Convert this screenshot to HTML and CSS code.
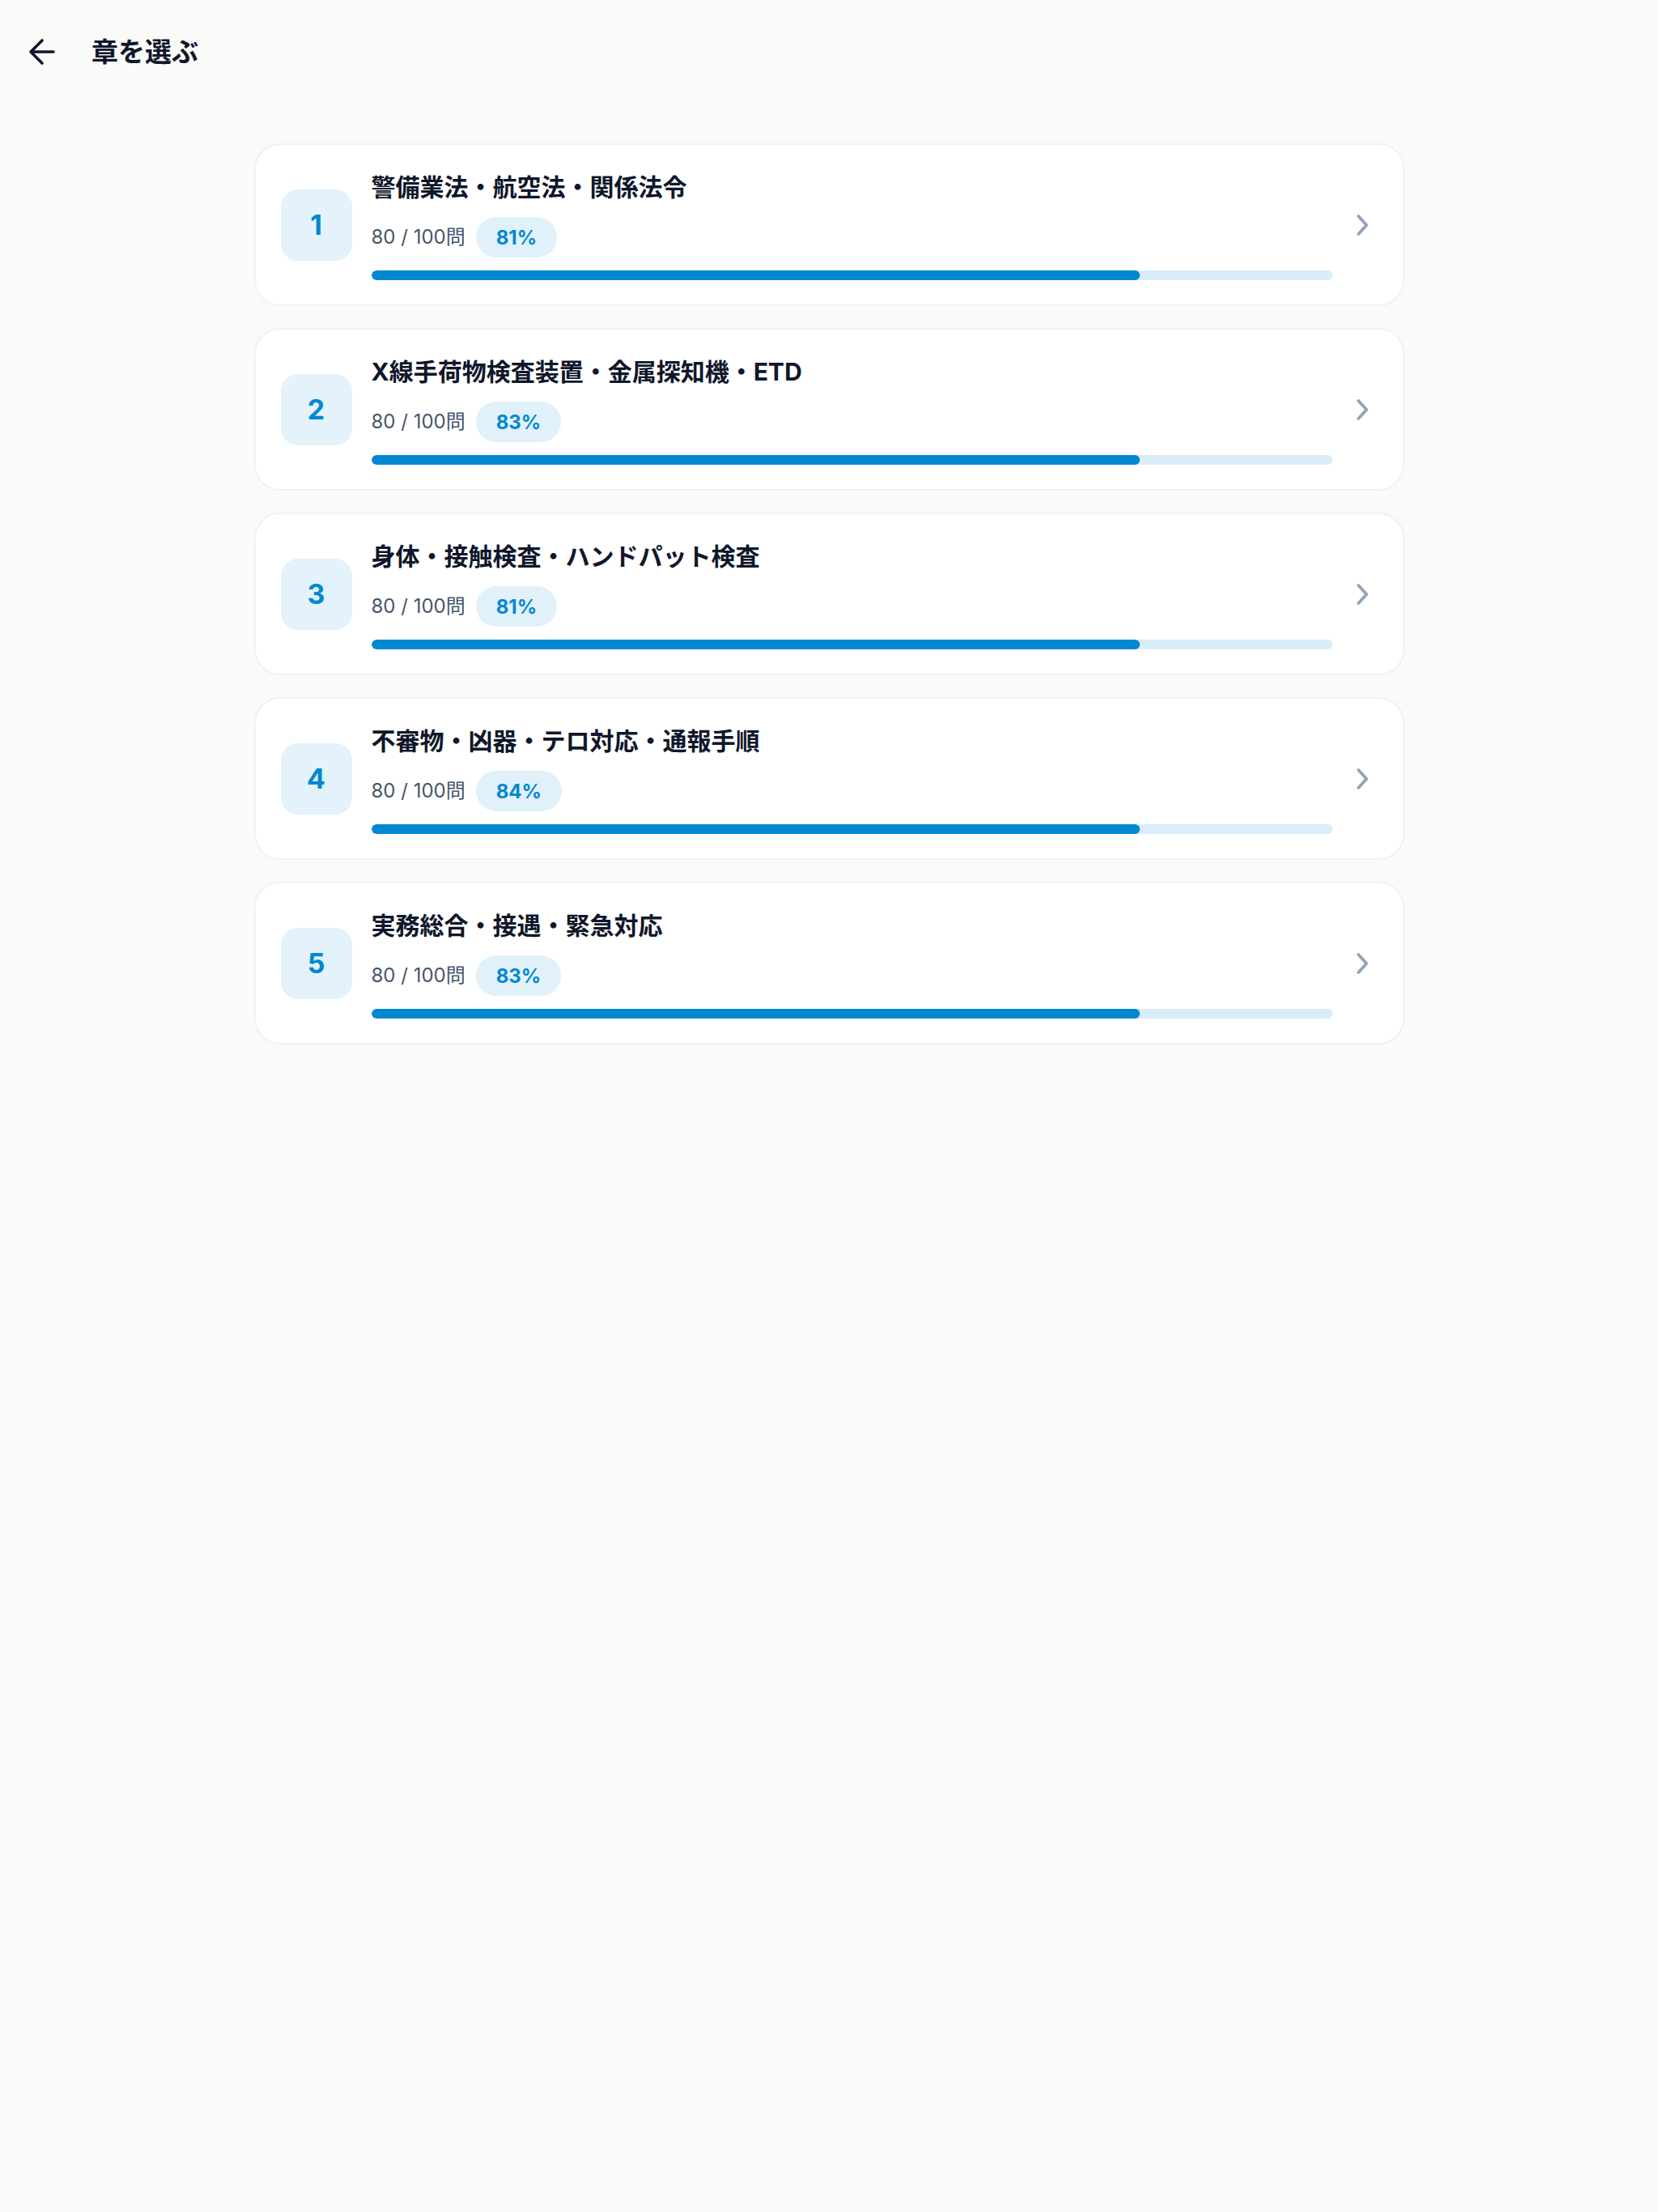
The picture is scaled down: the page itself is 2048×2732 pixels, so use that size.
FILE: index.html
```html
<!DOCTYPE html>
<html lang="ja">
<head>
<meta charset="utf-8">
<title>章を選ぶ</title>
<link rel="stylesheet" href="styles.css">
</head>
<body>
<header class="header">
  <button class="back" aria-label="戻る">
    <svg width="34" height="34" viewBox="0 0 34 34" fill="none" stroke="#0f172a" stroke-width="3.6" stroke-linecap="round" stroke-linejoin="round"><path d="M31 17H4"/><path d="M17 3L3 17L17 31"/></svg>
  </button>
  <h1 class="page-title">章を選ぶ</h1>
</header>
<main class="list">
  <div class="card">
    <div class="num">1</div>
    <div class="body">
      <div class="title">警備業法・航空法・関係法令</div>
      <div class="meta"><span class="count">80 / 100問</span><span class="pill">81%</span></div>
      <div class="track"><div class="fill" style="width:80%"></div></div>
    </div>
    <svg class="chev" width="18" height="28" viewBox="0 0 18 28" fill="none" stroke="#94a3b8" stroke-width="3.8" stroke-linecap="round" stroke-linejoin="round"><path d="M4 3L14 14L4 25"/></svg>
  </div>
  <div class="card">
    <div class="num">2</div>
    <div class="body">
      <div class="title">X線手荷物検査装置・金属探知機・ETD</div>
      <div class="meta"><span class="count">80 / 100問</span><span class="pill">83%</span></div>
      <div class="track"><div class="fill" style="width:80%"></div></div>
    </div>
    <svg class="chev" width="18" height="28" viewBox="0 0 18 28" fill="none" stroke="#94a3b8" stroke-width="3.8" stroke-linecap="round" stroke-linejoin="round"><path d="M4 3L14 14L4 25"/></svg>
  </div>
  <div class="card">
    <div class="num">3</div>
    <div class="body">
      <div class="title">身体・接触検査・ハンドパット検査</div>
      <div class="meta"><span class="count">80 / 100問</span><span class="pill">81%</span></div>
      <div class="track"><div class="fill" style="width:80%"></div></div>
    </div>
    <svg class="chev" width="18" height="28" viewBox="0 0 18 28" fill="none" stroke="#94a3b8" stroke-width="3.8" stroke-linecap="round" stroke-linejoin="round"><path d="M4 3L14 14L4 25"/></svg>
  </div>
  <div class="card">
    <div class="num">4</div>
    <div class="body">
      <div class="title">不審物・凶器・テロ対応・通報手順</div>
      <div class="meta"><span class="count">80 / 100問</span><span class="pill">84%</span></div>
      <div class="track"><div class="fill" style="width:80%"></div></div>
    </div>
    <svg class="chev" width="18" height="28" viewBox="0 0 18 28" fill="none" stroke="#94a3b8" stroke-width="3.8" stroke-linecap="round" stroke-linejoin="round"><path d="M4 3L14 14L4 25"/></svg>
  </div>
  <div class="card">
    <div class="num">5</div>
    <div class="body">
      <div class="title">実務総合・接遇・緊急対応</div>
      <div class="meta"><span class="count">80 / 100問</span><span class="pill">83%</span></div>
      <div class="track"><div class="fill" style="width:80%"></div></div>
    </div>
    <svg class="chev" width="18" height="28" viewBox="0 0 18 28" fill="none" stroke="#94a3b8" stroke-width="3.8" stroke-linecap="round" stroke-linejoin="round"><path d="M4 3L14 14L4 25"/></svg>
  </div>
</main>
</body>
</html>
```
FILE: styles.css
```css
* { box-sizing: border-box; }
html, body {
  margin: 0;
  padding: 0;
  background: #fafaf9;
  font-family: Inter, "Noto Sans CJK JP", "Noto Sans", sans-serif;
  color: #0f172a;
}
.header {
  height: 128px;
  display: flex;
  align-items: center;
  padding: 0 0 0 35px;
}
.back {
  background: none;
  border: 0;
  padding: 0;
  margin: 0;
  width: 34px;
  height: 34px;
  display: flex;
  cursor: pointer;
}
.page-title {
  margin: 0 0 0 44px;
  font-size: 33px;
  font-weight: 700;
  line-height: 1.4;
  color: #0f172a;
}
.list {
  width: 1421px;
  margin: 49px auto 0;
  display: flex;
  flex-direction: column;
  gap: 27px;
}
.card {
  height: 201px;
  background: #fff;
  border: 2px solid #eef2f7;
  border-radius: 32px;
  padding: 0 41px 0 31px;
  display: flex;
  align-items: center;
}
.num {
  width: 88px;
  height: 88px;
  flex: none;
  border-radius: 21px;
  background: #e3f2fb;
  color: #0288d1;
  font-size: 34px;
  font-weight: 700;
  display: flex;
  align-items: center;
  justify-content: center;
}
.body {
  flex: 1;
  margin-left: 24px;
  margin-right: 28px;
  display: flex;
  flex-direction: column;
}
.title {
  font-size: 30px;
  font-weight: 700;
  line-height: 45px;
  color: #0f172a;
}
.meta {
  margin-top: 14px;
  display: flex;
  align-items: center;
  gap: 13px;
}
.count {
  font-size: 24px;
  color: #475569;
  line-height: 1;
}
.pill {
  height: 50px;
  padding: 0 25px;
  border-radius: 25px;
  background: #e1f1fa;
  color: #0288d1;
  font-size: 24px;
  font-weight: 700;
  display: inline-flex;
  align-items: center;
}
.track {
  margin-top: 16px;
  height: 12px;
  border-radius: 6px;
  background: #d9ecf8;
  overflow: hidden;
}
.fill {
  height: 100%;
  border-radius: 6px;
  background: #0288d1;
}
.chev {
  flex: none;
  display: block;
}
```
